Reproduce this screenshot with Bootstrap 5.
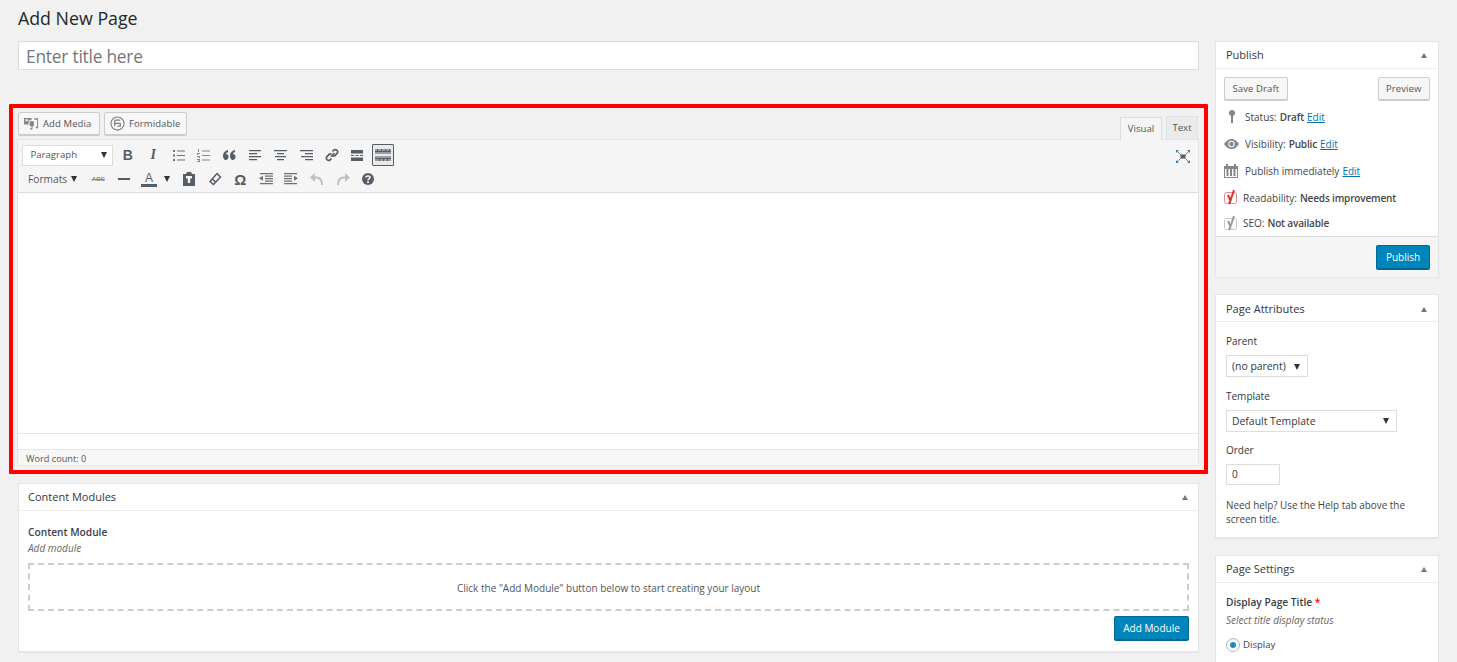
<!DOCTYPE html>
<html lang="en">
<head>
<meta charset="utf-8">
<title>Add New Page</title>
<link href="https://cdn.jsdelivr.net/npm/bootstrap@5.3.0/dist/css/bootstrap.min.css" rel="stylesheet">
<style>
html,body{height:662px;overflow:hidden}
body{background:#f1f1f1;color:#444;font-family:"Open Sans","Noto Sans",sans-serif;font-size:10px;line-height:1.4}
.wp-page{padding:0 18px;height:662px;overflow:hidden}
.wp-h1{font-size:17.8px;font-weight:400;color:#23282d;margin:0;height:41px;padding-top:6px;line-height:24px}
.wp-layout{gap:16px;align-items:flex-start}
.wp-main{width:1181px;flex:none}
.wp-side{width:224px;flex:none}
.wp-title{height:29px;border:1px solid #ddd;background:#fff;padding:0 7px;font-size:17.3px;letter-spacing:-.2px;color:#72777c;line-height:30px;box-shadow:inset 0 1px 2px rgba(0,0,0,.04)}
.wp-red{border:4px solid #f00;margin:34px -9px 9px -9px;padding:0 5px 5px 4px;height:370px;border-radius:1px}
.wp-tools{height:31px;position:relative;padding-left:1px}
.wp-btn{height:23px;border:1px solid #ccc;border-radius:2px;background:#f7f7f7;box-shadow:0 1px 0 #ccc;font-size:9.500px;letter-spacing:.1px;color:#555;display:inline-flex;align-items:center;line-height:1;padding:0 7.500px;white-space:nowrap}
.wp-btn svg{flex:none}
.wp-media{width:82px;gap:4px;padding:0 0 0 5px;margin-top:4px}
.wp-form{width:83px;gap:4px;padding:0 0 0 5px;margin-top:4px;margin-left:4px}
.wp-tabs{margin-left:auto;margin-right:1px;align-items:flex-end;height:31px;gap:4px}
.wp-tab{height:23px;width:32px;text-align:center;font-size:9.6px;color:#555;border:1px solid #e2e2e2;border-bottom:0;background:#ebebeb;line-height:22px}
.wp-tab-on{background:#f5f5f5;border-color:#ddd;margin-bottom:-1px;position:relative;width:42px}
.wp-editor{border:1px solid #e5e5e5;height:327px;margin-right:0;background:#fff}
.wp-bar{height:53px;background:#f5f5f5;border-bottom:1px solid #ddd;padding:3px 4px 0 4px;position:relative}
.wp-row{height:24px;align-items:center}
.wp-select{width:91px;height:21px;border:1px solid #ddd;background:#fff;font-size:9.6px;color:#555;padding-left:7.500px;align-items:center;justify-content:space-between;padding-right:5px;margin-right:2px}
.wp-formats{width:63.500px;font-size:10.2px;color:#555;padding-left:6px;gap:4px;align-items:center}
.wp-ic{width:25.500px;height:22px;display:flex;align-items:center;justify-content:center;color:#555d66;flex:none}
.wp-row2 .wp-ic{width:25.600px}
.wp-ic svg{display:block}
.wp-ic-on{width:22px;margin:0 2px;border:1px solid #555d66;background:#eaeaea;border-radius:1px}
.wp-b{font:700 14px/1 "Liberation Sans",sans-serif}
.wp-i{font:italic 700 14px/1 "Liberation Serif",serif}
.wp-omega{font:700 15px/1 "Liberation Sans",sans-serif}
.wp-abc{font:700 6px/1 "Liberation Sans",sans-serif;text-decoration:line-through;color:#82878c}
.wp-a{font:400 12px/1 "Liberation Sans",sans-serif;border-bottom:3px solid #555d66;padding:0 2px;width:16px;text-align:center}
.wp-a-slot{margin-left:-.500px}
.wp-caret-slot{width:11px}
.wp-paste{margin-left:3.500px}
.wp-full{position:absolute;right:8px;top:8px}
.wp-area{height:240px;background:#fff}
.wp-blank{height:16px;border-top:1px solid #e5e5e5;background:#fff}
.wp-status{height:16px;background:#f7f7f7;border-top:1px solid #e5e5e5;font-size:9.2px;color:#555;padding-left:8px;line-height:17px}
.wp-box{background:#fff;border:1px solid #e5e5e5;box-shadow:0 1px 1px rgba(0,0,0,.04)}
.wp-head{height:27px;border-bottom:1px solid #eee;padding:0 9px;font-size:11px;color:#32373c;align-items:center;justify-content:space-between}
.wp-side .wp-head{padding:0 10px}
.wp-attr .wp-head{padding-top:2px}
.wp-tri{width:0;height:0;border-left:3.500px solid transparent;border-right:3.500px solid transparent;border-bottom:5px solid #72777c;margin-right:1px}
.wp-modules{height:169px}
.wp-mod-body{padding:13px 9px 0;position:relative}
.wp-strong{font-weight:600;color:#3c4146;font-size:10.2px;line-height:16px}
.wp-em{font-style:italic;color:#666;font-size:10px;line-height:16px}
.wp-drop{height:48px;border:2px dashed #ccc;margin-top:7px;font-size:10px;color:#555;align-items:center;justify-content:center;padding-top:1px}
.wp-blue{background:#0085ba;border:1px solid #006799;border-bottom-width:2px;color:#fff;border-radius:2px;height:25px;font-size:10px;font-weight:500;align-items:center;justify-content:center;display:flex;line-height:1}
.wp-addmod{width:75px;margin:5px 0 0 auto}
.wp-pub{height:236px;margin-bottom:17px}
.wp-pub-btns{padding:8px 8px 0;justify-content:space-between}
.wp-pub-btn{height:23px;margin:0}
.wp-pub-list{margin-top:3px}
.wp-misc{height:27px;align-items:center;padding-left:8px;white-space:nowrap;color:#444;font-size:10px}
.wp-misc-last{height:24px}
.wp-misc a{color:#0073aa;margin-left:3px;text-decoration:underline}
.wp-misc b{font-weight:600;letter-spacing:-.15px;margin-left:3px}
.wp-misc-ic{width:21px;display:flex;justify-content:flex-start;flex:none}
.wp-misc-yo{width:19px;display:flex;flex:none}
.wp-pin{margin-left:4px}
.wp-pub-foot{height:41px;background:#f5f5f5;border-top:1px solid #ddd;padding:8px 8px 0;margin-top:1px;justify-content:flex-end}
.wp-pub-go{width:54px}
.wp-attr{height:244px;margin-bottom:17px}
.wp-attr-body{padding:12px 10px 0}
.wp-lab{font-size:10px;line-height:14px;color:#32373c;font-weight:500}
.wp-sel{height:22px;border:1px solid #ddd;background:#fff;color:#32373c;font-size:10.400px;align-items:center;justify-content:space-between;padding:0 7px 0 5px;margin-top:7px}
.wp-sel-a{width:82px;margin-bottom:12px;padding-top:1px}
.wp-sel-b{width:171px;margin-bottom:11px}
.wp-order{width:54px;height:21px;border:1px solid #ddd;background:#fff;font-size:10px;color:#32373c;padding-left:5px;line-height:19px;margin-top:7px}
.wp-help{margin-top:13px;font-size:9.900px;line-height:14px;color:#444}
.wp-down{width:0;height:0;border-left:3.500px solid transparent;border-right:3.500px solid transparent;border-top:6px solid #333}
.wp-settings{height:200px}
.wp-set-body{padding:11px 10px 0}
.wp-set-em{margin-top:2px}
.wp-req{color:#f00}
.wp-radio{width:14px;height:14px;border:1px solid #b4b9be;border-radius:50%;background:#fff;display:flex;align-items:center;justify-content:center;box-shadow:inset 0 1px 2px rgba(0,0,0,.1)}
.wp-radio i{display:block;width:6px;height:6px;border-radius:50%;background:#1e8cbe}
.wp-rad-row{gap:3px;align-items:center;font-size:9.600px;margin-top:10px;color:#444}
</style>
</head>
<body>
<div class="wp-page">
  <h1 class="wp-h1">Add New Page</h1>
  <div class="d-flex wp-layout">
    <div class="wp-main">
      <div class="wp-title">Enter title here</div>
      <div class="wp-red">
        <div class="wp-tools d-flex">
          <span class="wp-btn wp-media">
            <svg width="15" height="15" viewBox="0 0 16 15"><path fill="#82878c" fill-rule="evenodd" d="M0 1.500h8V4H5v4.500H0zM1.500 3v2.500L3 4.500 4 5V3zM6 5h4.500v5.500H9V14H6.500v-1.500H8V10.500H6z"/><path fill="#82878c" d="M11 2h4v10.500h-2.500V11H14V3.500h-3z"/></svg>Add Media</span>
          <span class="wp-btn wp-form">
            <svg width="15" height="15" viewBox="0 0 16 16"><circle cx="8" cy="8" r="7" fill="none" stroke="#7a7f84" stroke-width="1.200"/><path fill="none" stroke="#7a7f84" stroke-width="1.300" d="M5 4.500h6M5 7.800h6M5 11V4.500M8 10.800h3V7.800"/></svg>Formidable</span>
          <div class="wp-tabs d-flex">
            <span class="wp-tab wp-tab-on">Visual</span>
            <span class="wp-tab">Text</span>
          </div>
        </div>
        <div class="wp-editor">
          <div class="wp-bar">
            <div class="d-flex wp-row">
              <span class="wp-select d-flex">Paragraph<i class="wp-down"></i></span>
              <span class="wp-ic wp-b">B</span>
              <span class="wp-ic wp-i">I</span>
              <span class="wp-ic"><svg width="14" height="13" viewBox="0 0 14 13" fill="#6b7177"><path d="M1 1h2v2H1zM5 1.500h8v1H5zM1 5.500h2v2H1zM5 6h8v1H5zM1 10h2v2H1zM5 10.500h8v1H5z"/></svg></span>
              <span class="wp-ic"><svg width="14" height="13" viewBox="0 0 14 13" fill="#82878c"><path d="M1 0h1v3H1zM0 4h3v1H0zM0 5h1v1H0zM0 7h3v1H0zM2 8h1v1H2zM0 10h3v1H0zM2 11h1v1H2zM0 12h3v1H0zM5 1.500h8v1H5zM5 6h8v1H5zM5 10.500h8v1H5z"/></svg></span>
              <span class="wp-ic"><svg width="13" height="10" viewBox="0 0 13 10" fill="#555d66"><path d="M0 5.500C0 2.500 2 .8 5 0v2C3.800 2.500 3.200 3 3 4c1.500 0 2.500 1 2.500 2.800C5.500 8.500 4.300 10 2.800 10 1 10 0 8 0 5.500zM7 5.500C7 2.500 9 .8 12 0v2c-1.200.5-1.800 1-2 2 1.500 0 2.500 1 2.500 2.800 0 1.700-1.200 3.200-2.700 3.200C8 10 7 8 7 5.500z"/></svg></span>
              <span class="wp-ic"><svg width="13" height="11" viewBox="0 0 13 11" fill="#555d66"><path d="M0 0h12v1.300H0zM0 3h8v1.300H0zM0 6h12v1.300H0zM0 9h8v1.300H0z"/></svg></span>
              <span class="wp-ic"><svg width="13" height="11" viewBox="0 0 13 11" fill="#555d66"><path d="M0 0h13v1.300H0zM3 3h7v1.300H3zM1 6h11v1.300H1zM3 9h7v1.300H3z"/></svg></span>
              <span class="wp-ic"><svg width="13" height="11" viewBox="0 0 13 11" fill="#555d66"><path d="M0 0h13v1.300H0zM5 3h8v1.300H5zM1 6h12v1.300H1zM5 9h8v1.300H5z"/></svg></span>
              <span class="wp-ic"><svg width="14" height="14" viewBox="0 0 14 14" fill="none" stroke="#555d66" stroke-width="1.700"><path d="M6 8.500l3.500-3.500M7.500 3.500l1.500-1.500a2.300 2.300 0 0 1 3.200 3.200L10 7.500a2.300 2.300 0 0 1-2.500.2M6.500 10.500L5 12a2.300 2.300 0 0 1-3.200-3.200L4 6.500a2.300 2.300 0 0 1 2.500-.2"/></svg></span>
              <span class="wp-ic"><svg width="12" height="11" viewBox="0 0 12 11" fill="#555d66"><path d="M0 0h12v3.500H0zM0 7.500h12V11H0zM0 5h3v1H0zM4.500 5h3v1h-3zM9 5h3v1H9z"/></svg></span>
              <span class="wp-ic wp-ic-on"><svg width="18" height="14" viewBox="0 0 18 14"><path fill="#9a9ea2" d="M1 1h16v5H1zM1 8h16v5H1z"/><path fill="#555d66" d="M1 3h16v1H1zM1 10h16v1H1zM3 1h1v2H3zM7 1h1v2H7zM11 1h1v2h-1zM15 1h1v2h-1zM5 11h1v2H5zM9 11h1v2H9zM13 11h1v2h-1z"/></svg></span>
            </div>
            <div class="d-flex wp-row wp-row2">
              <span class="wp-formats d-flex">Formats<i class="wp-down"></i></span>
              <span class="wp-ic"><span class="wp-abc">ABC</span></span>
              <span class="wp-ic"><svg width="12" height="2" viewBox="0 0 12 2"><path fill="#555d66" d="M0 0h12v2H0z"/></svg></span>
              <span class="wp-ic wp-a-slot"><span class="wp-a">A</span></span>
              <span class="d-flex align-items-center justify-content-center wp-caret-slot"><i class="wp-down"></i></span>
              <span class="wp-ic wp-paste"><svg width="14" height="14" viewBox="0 0 14 14"><path fill="#555d66" d="M1 2h3l1-2h4l1 2h3v12H1z"/><path fill="#f5f5f5" d="M4 4h6v2.500H8.200V11H5.800V6.500H4z"/></svg></span>
              <span class="wp-ic"><svg width="14" height="14" viewBox="0 0 14 14" fill="none" stroke="#555d66" stroke-width="1.500"><path d="M9 1.500l3.500 3.500-7 7.500L2 9.500zM4.500 7l3.500 3.500"/></svg></span>
              <span class="wp-ic wp-omega">Ω</span>
              <span class="wp-ic"><svg width="14" height="12" viewBox="0 0 14 12" fill="#6b7177"><path d="M1 0h13v1.200H1zM6 2.500h8v1.200H6zM6 5h8v1.200H6zM6 7.500h8v1.200H6zM1 10h13v1.200H1zM4 2.800v5L0 5.300z"/></svg></span>
              <span class="wp-ic"><svg width="14" height="12" viewBox="0 0 14 12" fill="#6b7177"><path d="M0 0h13v1.200H0zM0 2.500h8v1.200H0zM0 5h8v1.200H0zM0 7.500h8v1.200H0zM0 10h13v1.200H0zM10 2.800v5l4-2.500z"/></svg></span>
              <span class="wp-ic"><svg width="14" height="13" viewBox="0 0 14 13"><path fill="none" stroke="#bcc0c4" stroke-width="2" d="M3 4.500h3.500c3.500 0 5.500 2.500 5.500 7.500"/><path fill="#bcc0c4" d="M0 4.500L5 0v9z"/></svg></span>
              <span class="wp-ic"><svg width="14" height="13" viewBox="0 0 14 13"><path fill="none" stroke="#bcc0c4" stroke-width="2" d="M11 4.500H7.500C4 4.500 2 7 2 12"/><path fill="#bcc0c4" d="M14 4.500L9 0v9z"/></svg></span>
              <span class="wp-ic"><svg width="12" height="12" viewBox="0 0 12 12"><circle cx="6" cy="6" r="6" fill="#555d66"/><path fill="none" stroke="#f5f5f5" stroke-width="1.600" d="M4 4.500C4 2.500 8 2.500 8 4.500 8 6 6 5.700 6 7.300"/><path fill="#f5f5f5" d="M5.100 8.300h1.800v1.700H5.100z"/></svg></span>
            </div>
            <span class="wp-full"><svg width="14" height="13" viewBox="0 0 14 13"><path stroke="#82878c" d="M1 1l4 4M13 1L9 5M1 12l4-4M13 12L9 8"/><path fill="#555d66" d="M4.500 4.500h5v4h-5z"/><path fill="#3f7fa8" d="M0 0h3L0 3zM14 0v3l-3-3zM0 13v-3l3 3zM14 13h-3l3-3z"/></svg></span>
          </div>
          <div class="wp-area"></div>
          <div class="wp-blank"></div>
          <div class="wp-status">Word count: 0</div>
        </div>
      </div>
      <div class="wp-box wp-modules">
        <div class="wp-head d-flex">Content Modules<i class="wp-tri"></i></div>
        <div class="wp-mod-body">
          <div class="wp-strong">Content Module</div>
          <div class="wp-em">Add module</div>
          <div class="wp-drop d-flex">Click the "Add Module" button below to start creating your layout</div>
          <div class="wp-blue wp-addmod">Add Module</div>
        </div>
      </div>
    </div>
    <div class="wp-side">
      <div class="wp-box wp-pub">
        <div class="wp-head d-flex">Publish<i class="wp-tri"></i></div>
        <div class="wp-pub-btns d-flex">
          <span class="wp-btn wp-pub-btn">Save Draft</span>
          <span class="wp-btn wp-pub-btn">Preview</span>
        </div>
        <div class="wp-pub-list">
          <div class="wp-misc d-flex"><span class="wp-misc-ic"><svg width="8" height="13" viewBox="0 0 8 13" class="wp-pin"><path fill="#82878c" d="M4 0a3 3 0 0 1 2.500 4.700L5 6v7H3V6L1.500 4.700A3 3 0 0 1 4 0z"/></svg></span>Status:<b>Draft</b><a href="#">Edit</a></div>
          <div class="wp-misc d-flex"><span class="wp-misc-ic"><svg width="15" height="10" viewBox="0 0 15 10"><path fill="#82878c" d="M0 5c2-3 4.500-5 7.500-5S13 2 15 5c-2 3-4.500 5-7.500 5S2 8 0 5z"/><circle cx="7.500" cy="5" r="3.200" fill="#fff"/><circle cx="7.500" cy="5" r="2.200" fill="#82878c"/></svg></span>Visibility:<b>Public</b><a href="#">Edit</a></div>
          <div class="wp-misc d-flex"><span class="wp-misc-ic"><svg width="14" height="14" viewBox="0 0 14 14"><path fill="#82878c" d="M0 2h2V0h2v2h6V0h2v2h2v12H0z"/><path fill="#fff" d="M1 5h12v8H1z"/><path fill="#82878c" d="M2.500 5h2v7h-2zM6 5h2v7H6zM9.500 5h2v7h-2z"/></svg></span>Publish immediately<a href="#">Edit</a></div>
          <div class="wp-misc d-flex"><span class="wp-misc-yo"><svg width="14" height="15" viewBox="0 0 14 15"><rect x=".5" y="2.500" width="12" height="11" rx="2" fill="#fff" stroke="#e58a8a" stroke-width="1"/><path fill="none" stroke="#dc3232" stroke-width="2" d="M4 5l2.500 5.500L10 0M6.500 10.500L5 14"/></svg></span>Readability:<b>Needs improvement</b></div>
          <div class="wp-misc wp-misc-last d-flex"><span class="wp-misc-yo"><svg width="14" height="15" viewBox="0 0 14 15"><rect x=".5" y="2.500" width="12" height="11" rx="2" fill="#fff" stroke="#c4c7ca" stroke-width="1"/><path fill="none" stroke="#999" stroke-width="2" d="M4 5l2.500 5.500L10 0M6.500 10.500L5 14"/></svg></span>SEO:<b>Not available</b></div>
        </div>
        <div class="wp-pub-foot d-flex"><span class="wp-blue wp-pub-go">Publish</span></div>
      </div>
      <div class="wp-box wp-attr">
        <div class="wp-head d-flex">Page Attributes<i class="wp-tri"></i></div>
        <div class="wp-attr-body">
          <div class="wp-lab">Parent</div>
          <div class="wp-sel wp-sel-a d-flex">(no parent)<i class="wp-down"></i></div>
          <div class="wp-lab">Template</div>
          <div class="wp-sel wp-sel-b d-flex">Default Template<i class="wp-down"></i></div>
          <div class="wp-lab">Order</div>
          <div class="wp-order">0</div>
          <div class="wp-help">Need help? Use the Help tab above the screen title.</div>
        </div>
      </div>
      <div class="wp-box wp-settings">
        <div class="wp-head d-flex">Page Settings<i class="wp-tri"></i></div>
        <div class="wp-set-body">
          <div class="wp-strong">Display Page Title <span class="wp-req">*</span></div>
          <div class="wp-em wp-set-em">Select title display status</div>
          <div class="wp-rad-row d-flex"><span class="wp-radio"><i></i></span>Display</div>
        </div>
      </div>
    </div>
  </div>
</div>
</body>
</html>
